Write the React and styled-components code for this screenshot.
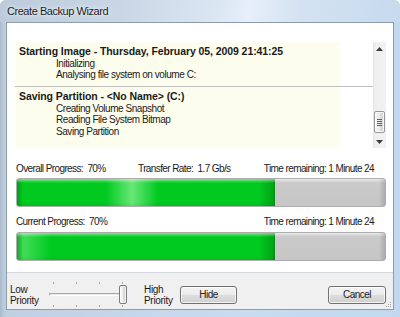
import React from 'react';
import styled, { createGlobalStyle } from 'styled-components';

const Global = createGlobalStyle`
  html, body { margin: 0; padding: 0; background: #ffffff; }
  body { font-family: "Liberation Sans", Arial, sans-serif; color: #1a1a1a; }
  * { box-sizing: border-box; }
`;

const Window = styled.div`
  width: 400px;
  height: 317px;
  display: flex;
  flex-direction: column;
  border-radius: 6px 6px 0 0;
  overflow: hidden;
  background:
    linear-gradient(to right, #a9bacb 0, #b8c8d9 3px, #bfd0e2 6px, #c9dcef 60%, #c1d8ef 100%);
`;

const TitleBar = styled.div`
  height: 22px;
  flex: none;
  display: flex;
  align-items: center;
  padding-left: 7px;
  font-size: 11px;
  letter-spacing: -0.45px;
  color: #1b1b1b;
  text-shadow: 0 0 6px rgba(255, 255, 255, 0.95), 0 0 2px rgba(255, 255, 255, 0.8);
  background: linear-gradient(100deg, #bccbdb 0%, #c8d6e5 30%, #dbe7f3 55%, #e6effa 62%, #d3e2f1 75%, #c6daee 100%);
`;

const Client = styled.div`
  flex: none;
  height: 288px;
  margin: 0 6px;
  border: 1px solid #8d9cad;
  display: flex;
  flex-direction: column;
  background: #f0f0f0;
`;

const Content = styled.div`
  height: 250px;
  flex: none;
  background: #ffffff;
  border-bottom: 1px solid #d6dbe0;
  padding: 19px 7px 0 8px;
  display: flex;
  flex-direction: column;
`;

const LogBox = styled.div`
  height: 106px;
  display: flex;
  flex: none;
`;

const LogList = styled.div`
  flex: 1;
  display: flex;
  flex-direction: column;
  background: linear-gradient(to right, #fdfdee 0, #fdfdee 322px, #ffffff 327px);
`;

const Entry = styled.div`
  padding: ${p => p.$top}px 0 ${p => p.$bottom}px 4px;
  border-bottom: ${p => (p.$divider ? '1px solid #bfbfbf' : 'none')};
  flex: ${p => (p.$grow ? 1 : 'none')};
  font-size: 10px;
  line-height: 11.5px;
`;

const EntryTitle = styled.div`
  font-weight: bold;
  font-size: 10.5px;
  letter-spacing: -0.08px;
  white-space: nowrap;
`;

const EntryLine = styled.div`
  padding-left: 37px;
  font-size: 10px;
  letter-spacing: -0.45px;
  white-space: nowrap;
`;

const Scrollbar = styled.div`
  width: 13px;
  flex: none;
  display: flex;
  flex-direction: column;
  background: linear-gradient(to right, #e3e3e3 0, #efefef 2px, #f2f2f2 100%);
`;

const ArrowBtn = styled.div`
  height: 13px;
  display: flex;
  align-items: center;
  justify-content: center;
`;

const Trough = styled.div`
  flex: 1;
  display: flex;
  flex-direction: column;
  padding: 0 1px;
`;

const Thumb = styled.div`
  height: 22px;
  border: 1px solid #979797;
  border-radius: 2px;
  background: linear-gradient(to right, #f6f6f6 0, #ececec 50%, #dcdcdc 51%, #d6d6d6 100%);
  box-shadow: inset 0 0 0 1px rgba(255, 255, 255, 0.8);
  display: flex;
  flex-direction: column;
  align-items: center;
  justify-content: center;
  gap: 1px;
`;

const Grip = styled.div`
  width: 5px;
  height: 1px;
  background: #5f5f5f;
`;

const ProgressSection = styled.div`
  padding-left: 1px;
  display: flex;
  flex-direction: column;
`;

const LabelRow = styled.div`
  display: grid;
  grid-template-columns: 122px 1fr auto;
  padding-right: 12px;
  margin-top: ${p => p.$mt}px;
  height: 12px;
  font-size: 10px;
  line-height: 12px;
  letter-spacing: -0.6px;
  white-space: nowrap;
`;

const Track = styled.div`
  margin-top: ${p => p.$mt}px;
  height: 29px;
  border: 1px solid #adadad;
  border-radius: 3px;
  overflow: hidden;
  display: flex;
  background:
    linear-gradient(to right, transparent calc(100% - 6px), rgba(0, 0, 0, 0.14) 100%),
    linear-gradient(to bottom, #ececec 0, #d8d8d8 2px, #cacaca 4px, #c6c6c6 100%);
`;

const Fill = styled.div`
  height: 100%;
  background:
    linear-gradient(to bottom, rgba(255, 255, 255, 0.5) 0, rgba(255, 255, 255, 0.25) 2px, rgba(255, 255, 255, 0) 4px, rgba(255, 255, 255, 0) 85%, rgba(0, 60, 0, 0.08) 100%),
    linear-gradient(to right, rgba(0, 70, 0, 0.35) 0, rgba(0, 70, 0, 0) 6px, rgba(0, 70, 0, 0) calc(100% - 16px), rgba(0, 80, 0, 0.3) calc(100% - 2px), rgba(0, 60, 0, 0.45) 100%),
    linear-gradient(to right,
      rgba(140, 240, 150, 0) ${p => p.$glow - 26}px,
      rgba(140, 240, 150, ${p => p.$glowAlpha}) ${p => p.$glow}px,
      rgba(140, 240, 150, 0) ${p => p.$glow + 26}px),
    #00ca20;
`;

const Footer = styled.div`
  flex: 1;
  position: relative;
  display: flex;
  align-items: center;
  padding: 7px 7px 0 3px;
`;

const PriorityLabel = styled.div`
  width: ${p => p.$w}px;
  margin-left: ${p => p.$ml || 0}px;
  font-size: 10px;
  line-height: 11px;
  letter-spacing: -0.3px;
  flex: none;
`;

const Slider = styled.div`
  position: relative;
  width: 78px;
  height: 25px;
  flex: none;
  display: flex;
  flex-direction: column;
  justify-content: space-between;
`;

const TickRow = styled.div`
  display: flex;
  justify-content: space-between;
  padding: 0 4px;
`;

const Tick = styled.div`
  width: 1px;
  height: 2px;
  background: #a8a8a8;
`;

const SliderTrack = styled.div`
  height: 3px;
  margin: 0 1px 0 0;
  border-top: 1px solid #a9a9a9;
  border-left: 1px solid #b9b9b9;
  border-bottom: 1px solid #ffffff;
  border-right: 1px solid #e6e6e6;
  background: #e7eaea;
`;

const SliderThumb = styled.div`
  position: absolute;
  left: ${p => p.$x}px;
  top: 3px;
  width: 8px;
  height: 19px;
  border: 1px solid #7b7b7b;
  border-radius: 2px;
  background: linear-gradient(to right, #fbfbfb 0, #eeeeee 50%, #dedede 51%, #d2d2d2 100%);
  box-shadow: inset 0 0 0 1px rgba(255, 255, 255, 0.7);
`;

const Button = styled.button`
  width: ${p => p.$w}px;
  height: 18px;
  margin-left: ${p => p.$ml || 0}px;
  flex: none;
  padding: 0;
  border: 1px solid #707070;
  border-radius: 3px;
  font-family: "Liberation Sans", Arial, sans-serif;
  font-size: 10px;
  letter-spacing: -0.5px;
  color: #1a1a1a;
  background: linear-gradient(to bottom, #f3f3f3 0, #ebebeb 50%, #dddddd 51%, #cfcfcf 100%);
  box-shadow: inset 0 0 0 1px rgba(255, 255, 255, 0.75);
`;

const Spacer = styled.div`
  flex: 1;
`;

const SizeGrip = styled.svg`
  position: absolute;
  right: 1px;
  bottom: 1px;
`;

const BottomFrame = styled.div`
  flex: 1;
`;

const UpArrow = () => (
  <svg width="7" height="4" viewBox="0 0 7 4">
    <path d="M3.5 0 L7 4 L0 4 Z" fill="#3c3c3c" />
  </svg>
);

const DownArrow = () => (
  <svg width="7" height="4" viewBox="0 0 7 4">
    <path d="M0 0 L7 0 L3.5 4 Z" fill="#3c3c3c" />
  </svg>
);

const entries = [
  {
    title: 'Starting Image - Thursday, February 05, 2009 21:41:25',
    lines: ['Initializing', 'Analysing file system on volume C:'],
  },
  {
    title: 'Saving Partition - <No Name> (C:)',
    lines: ['Creating Volume Snapshot', 'Reading File System Bitmap', 'Saving Partition'],
  },
];

export default function App() {
  return (
    <>
      <Global />
      <Window>
        <TitleBar>Create Backup Wizard</TitleBar>
        <Client>
          <Content>
            <LogBox>
              <LogList>
                <Entry $top={4} $bottom={5.5} $divider>
                  <EntryTitle>{entries[0].title}</EntryTitle>
                  {entries[0].lines.map(l => <EntryLine key={l}>{l}</EntryLine>)}
                </Entry>
                <Entry $top={4.25} $bottom={0} $grow>
                  <EntryTitle>{entries[1].title}</EntryTitle>
                  {entries[1].lines.map(l => <EntryLine key={l}>{l}</EntryLine>)}
                </Entry>
              </LogList>
              <Scrollbar>
                <ArrowBtn><UpArrow /></ArrowBtn>
                <Trough>
                  <Thumb style={{ marginTop: 56 }}>
                    <Grip /><Grip /><Grip /><Grip />
                  </Thumb>
                </Trough>
                <ArrowBtn><DownArrow /></ArrowBtn>
              </Scrollbar>
            </LogBox>
            <ProgressSection>
              <LabelRow $mt={15}>
                <span>Overall Progress:&nbsp;&nbsp;70%</span>
                <span>Transfer Rate:&nbsp;&nbsp;1.7 Gb/s</span>
                <span>Time remaining:&nbsp;1 Minute 24</span>
              </LabelRow>
              <Track $mt={3}>
                <Fill style={{ width: '70%' }} $glow={115} $glowAlpha={0.75} />
              </Track>
              <LabelRow $mt={9}>
                <span>Current Progress:&nbsp;&nbsp;70%</span>
                <span />
                <span>Time remaining:&nbsp;1 Minute 24</span>
              </LabelRow>
              <Track $mt={4}>
                <Fill style={{ width: '70%' }} $glow={8} $glowAlpha={0.45} />
              </Track>
            </ProgressSection>
          </Content>
          <Footer>
            <PriorityLabel $w={39}>Low<br />Priority</PriorityLabel>
            <Slider>
              <TickRow><Tick /><Tick /><Tick /><Tick /></TickRow>
              <SliderTrack />
              <TickRow><Tick /><Tick /><Tick /><Tick /></TickRow>
              <SliderThumb $x={70} />
            </Slider>
            <PriorityLabel $w={36} $ml={17}>High<br />Priority</PriorityLabel>
            <Button $w={57}>Hide</Button>
            <Spacer />
            <Button $w={58}>Cancel</Button>
            <SizeGrip width="6" height="6" viewBox="0 0 6 6">
              <rect x="4" y="0" width="1" height="1" fill="#a0a0a0" />
              <rect x="2" y="2" width="1" height="1" fill="#a0a0a0" />
              <rect x="4" y="2" width="1" height="1" fill="#a0a0a0" />
              <rect x="0" y="4" width="1" height="1" fill="#a0a0a0" />
              <rect x="2" y="4" width="1" height="1" fill="#a0a0a0" />
              <rect x="4" y="4" width="1" height="1" fill="#a0a0a0" />
            </SizeGrip>
          </Footer>
        </Client>
        <BottomFrame />
      </Window>
    </>
  );
}
